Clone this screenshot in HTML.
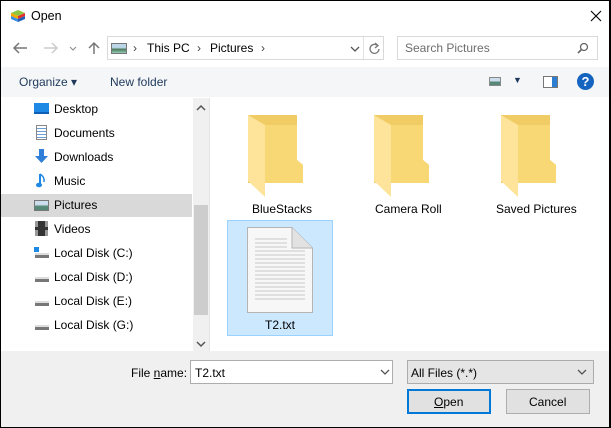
<!DOCTYPE html>
<html><head><meta charset="utf-8"><style>
*{margin:0;padding:0;box-sizing:border-box}
body{width:611px;height:428px;overflow:hidden;background:#000;font-family:"Liberation Sans",sans-serif;font-size:12px;color:#000;position:relative}
.win{position:absolute;left:1px;top:1px;width:608px;height:426px;background:#fff;overflow:hidden}
.a{position:absolute}
.t{position:absolute;white-space:nowrap}
.side .t{left:53px}
</style></head><body><div class="win">
<svg class="a" style="left:9px;top:8px" width="16" height="14"><path d="M1 4 L8 1 L15 4 L8 7Z" fill="#8dc63f"/><path d="M1 4 L8 7 L8 10 L1 7Z" fill="#f7a800"/><path d="M15 4 L8 7 L8 10 L15 7Z" fill="#e3312d"/><path d="M1 7 L8 10 L8 13 L1 10Z" fill="#3b8ee0"/><path d="M15 7 L8 10 L8 13 L15 10Z" fill="#1c5fb4"/></svg>
<div class="t" style="left:30px;top:8px;font-size:12.5px">Open</div>
<svg class="a" style="left:589px;top:9px" width="12" height="12"><path d="M1 1L11 11M11 1L1 11" stroke="#000" stroke-width="1.1"/></svg>
<!-- nav -->
<svg class="a" style="left:10px;top:40px" width="90" height="14" fill="none" stroke-width="1.5"><path d="M3 7H16M8 2L3 7L8 12" stroke="#777"/><path d="M33 7H46M41 2L46 7L41 12" stroke="#ccc"/><path d="M59 6L62 9L65 6" stroke="#888" stroke-width="1"/><path d="M83 13V2M78 7L83 2L88 7" stroke="#777"/></svg>
<div class="a" style="left:106px;top:35px;width:277px;height:24px;border:1px solid #d9d9d9"></div>
<div class="a" style="left:110px;top:42px;width:16px;height:11px;border:1px solid #777;background:linear-gradient(#bcd6ea 40%,#4a7a5a 60%,#9cb)"></div>
<div class="t" style="left:132px;top:40px;font-size:12px;color:#444">›</div>
<div class="t" style="left:146px;top:40px">This PC</div>
<div class="t" style="left:196px;top:40px;color:#444">›</div>
<div class="t" style="left:209px;top:40px">Pictures</div>
<div class="t" style="left:260px;top:40px;color:#444">›</div>
<svg class="a" style="left:349px;top:44px" width="10" height="8"><path d="M1 2L5 6L9 2" stroke="#555" fill="none" stroke-width="1.3"/></svg>
<div class="a" style="left:362px;top:36px;width:1px;height:22px;background:#e3e3e3"></div>
<svg class="a" style="left:367px;top:41px" width="13" height="13"><path d="M9.5 3.5A4.5 4.5 0 1 0 11 7" stroke="#777" fill="none" stroke-width="1.3"/><path d="M7 1L10 3.5L7 6" stroke="#777" fill="none" stroke-width="1.3"/></svg>
<div class="a" style="left:396px;top:35px;width:201px;height:24px;border:1px solid #d9d9d9"></div>
<div class="t" style="left:404px;top:40px;color:#6d6d6d">Search Pictures</div>
<svg class="a" style="left:576px;top:41px" width="12" height="12"><circle cx="7" cy="5" r="3.5" stroke="#666" fill="none" stroke-width="1.3"/><path d="M4.5 7.5L1 11" stroke="#666" stroke-width="1.6"/></svg>
<!-- toolbar -->
<div class="a" style="left:0;top:66px;width:608px;height:30px;background:#f5f6f7"></div>
<div class="t" style="left:18px;top:74px;color:#1e395b">Organize ▾</div>
<div class="t" style="left:109px;top:74px;color:#1e395b">New folder</div>
<div class="a" style="left:488px;top:76px;width:12px;height:9px;border:1px solid #888;background:linear-gradient(#cde 40%,#587 60%)"></div>
<div class="t" style="left:512px;top:74px;font-size:9px;color:#1e395b">▼</div>
<div class="a" style="left:542px;top:75px;width:15px;height:12px;border:1px solid #777;background:linear-gradient(90deg,#fff 60%,#2c7fd0 60%)"></div>
<div class="a" style="left:576px;top:72px;width:17px;height:17px;border-radius:50%;background:#1565c0;color:#fff;font-weight:bold;font-size:13px;text-align:center;line-height:17px">?</div>
<!-- sidebar -->
<div class="side">
<div class="a" style="left:0;top:193px;width:191px;height:23px;background:#d9d9d9"></div>
<div class="a" style="left:33px;top:102px;width:15px;height:11px;background:#1e88e5;border-bottom:2px solid #0d5fb8"></div>
<div class="t" style="top:101px">Desktop</div>
<div class="a" style="left:35px;top:124px;width:11px;height:15px;border:1px solid #888;background:repeating-linear-gradient(#fff 0 2px,#6a9fd6 2px 3px)"></div>
<div class="t" style="top:125px">Documents</div>
<svg class="a" style="left:33px;top:148px" width="15" height="15"><path d="M5 0H10V7H14L7.5 14L1 7H5Z" fill="#2f7ed8"/></svg>
<div class="t" style="top:149px">Downloads</div>
<svg class="a" style="left:35px;top:172px" width="12" height="15"><path d="M4 1V11" stroke="#1e88e5" stroke-width="2"/><ellipse cx="3" cy="12" rx="3" ry="2.3" fill="#1e88e5"/><path d="M4 1Q9 4 8 9" stroke="#1e88e5" stroke-width="1.5" fill="none"/></svg>
<div class="t" style="top:173px">Music</div>
<div class="a" style="left:33px;top:199px;width:15px;height:11px;border:1px solid #777;background:linear-gradient(#cde 40%,#587 60%)"></div>
<div class="t" style="top:197px">Pictures</div>
<div class="a" style="left:34px;top:220px;width:13px;height:15px;background:#333;border-left:3px dashed #999;border-right:3px dashed #999"></div>
<div class="t" style="top:221px">Videos</div>
<div class="a" style="left:34px;top:252px;width:14px;height:5px;background:#777;border-top:2px solid #ddd"></div>
<div class="a" style="left:33px;top:246px;width:5px;height:5px;background:#1e88e5"></div>
<div class="t" style="top:245px">Local Disk (C:)</div>
<div class="a" style="left:34px;top:276px;width:14px;height:5px;background:#777;border-top:2px solid #ddd"></div>
<div class="t" style="top:269px">Local Disk (D:)</div>
<div class="a" style="left:34px;top:300px;width:14px;height:5px;background:#777;border-top:2px solid #ddd"></div>
<div class="t" style="top:293px">Local Disk (E:)</div>
<div class="a" style="left:34px;top:324px;width:14px;height:5px;background:#777;border-top:2px solid #ddd"></div>
<div class="t" style="top:317px">Local Disk (G:)</div>
</div>
<div class="a" style="left:192px;top:97px;width:16px;height:253px;background:#f0f0f0"></div>
<div class="a" style="left:193px;top:204px;width:14px;height:110px;background:#cdcdcd"></div>
<svg class="a" style="left:195px;top:103px" width="10" height="8"><path d="M1 6L5 2L9 6" stroke="#555" fill="none" stroke-width="1.5"/></svg>
<svg class="a" style="left:195px;top:339px" width="10" height="8"><path d="M1 2L5 6L9 2" stroke="#555" fill="none" stroke-width="1.5"/></svg>
<div class="a" style="left:208px;top:97px;width:1px;height:253px;background:#e5e5e5"></div>
<!-- folders -->
<svg width="0" height="0" style="position:absolute"><defs><g id="f"><path d="M0 0H49V45L55 50V68H0Z" fill="#f1cc64"/><path d="M0 0L17 10V82L0 66Z" fill="#fde49a"/><path d="M17 10H49V45L55 50V68H17Z" fill="#f8d775"/></g></defs></svg>
<svg class="a" style="left:247px;top:114px" width="56" height="84"><use href="#f"/></svg>
<svg class="a" style="left:373px;top:114px" width="56" height="84"><use href="#f"/></svg>
<svg class="a" style="left:500px;top:114px" width="56" height="84"><use href="#f"/></svg>
<div class="t" style="left:251px;top:201px">BlueStacks</div>
<div class="t" style="left:374px;top:201px">Camera Roll</div>
<div class="t" style="left:495px;top:201px">Saved Pictures</div>
<div class="a" style="left:226px;top:219px;width:106px;height:116px;background:#cce8ff;border:1px solid #99d1ff"></div>
<svg class="a" style="left:246px;top:226px" width="66" height="86"><path d="M0.5 0.5H45L65.5 21V85.5H0.5Z" fill="#f7f7f7" stroke="#b5b5b5"/><path d="M45 0.5V21H65.5" fill="#e2e2e2" stroke="#b5b5b5"/><g stroke="#c8c8c8"><path d="M8 12H40M8 16H40M8 20H40M8 24H58M8 28H58M8 32H58M8 36H58M8 40H58M8 44H58M8 48H58M8 52H58M8 56H58M8 60H58M8 64H58M8 68H58M8 72H58"/></g></svg>
<div class="t" style="left:264px;top:317px">T2.txt</div>
<!-- bottom -->
<div class="a" style="left:0;top:350px;width:608px;height:76px;background:#f0f0f0"></div>
<div class="t" style="left:130px;top:365px">File <u>n</u>ame:</div>
<div class="a" style="left:189px;top:359px;width:203px;height:24px;background:#fff;border:1px solid #adadad"></div>
<div class="t" style="left:194px;top:365px">T2.txt</div>
<svg class="a" style="left:379px;top:367px" width="10" height="8"><path d="M1 2L5 6L9 2" stroke="#555" fill="none" stroke-width="1.3"/></svg>
<div class="a" style="left:406px;top:359px;width:187px;height:24px;background:#e5e5e5;border:1px solid #acacac"></div>
<div class="t" style="left:410px;top:365px">All Files (*.*)</div>
<svg class="a" style="left:576px;top:367px" width="10" height="8"><path d="M1 2L5 6L9 2" stroke="#555" fill="none" stroke-width="1.3"/></svg>
<div class="a" style="left:406px;top:388px;width:84px;height:25px;background:#e1e1e1;border:2px solid #0078d7"></div>
<div class="t" style="left:433px;top:394px"><u>O</u>pen</div>
<div class="a" style="left:505px;top:388px;width:84px;height:25px;background:#e1e1e1;border:1px solid #adadad"></div>
<div class="t" style="left:528px;top:394px">Cancel</div>
</div></body></html>
